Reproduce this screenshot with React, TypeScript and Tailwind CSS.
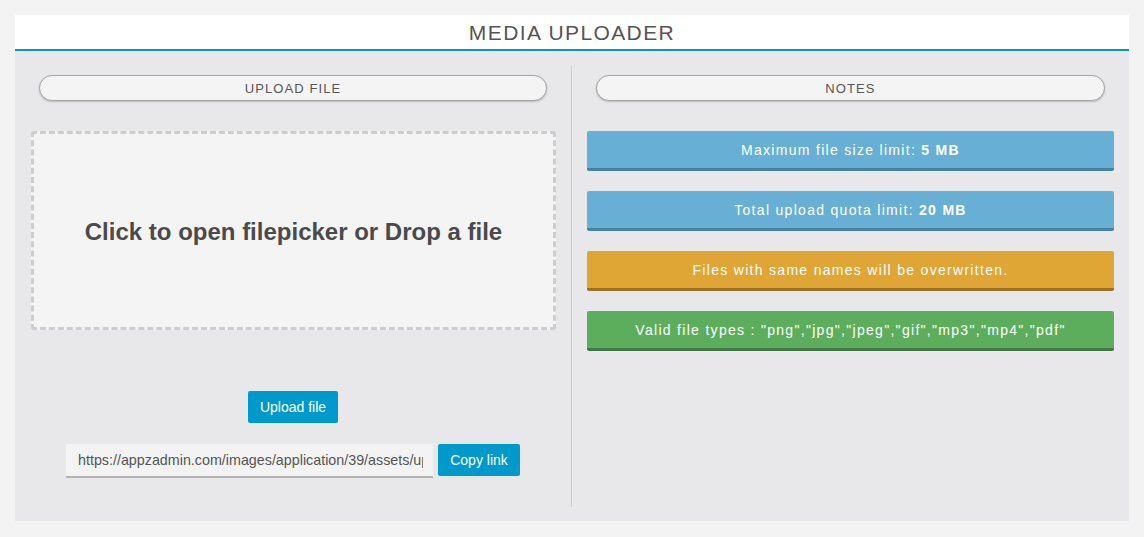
import React from "react"

const notes = [
  {
    key: "size",
    className: "bg-[#67afd4] border-[#4683a2]",
    body: (
      <>
        Maximum file size limit: <b>5 MB</b>
      </>
    ),
  },
  {
    key: "quota",
    className: "bg-[#67afd4] border-[#4683a2]",
    body: (
      <>
        Total upload quota limit: <b>20 MB</b>
      </>
    ),
  },
  {
    key: "overwrite",
    className: "bg-[#dfa535] border-[#9b7224]",
    body: <>Files with same names will be overwritten.</>,
  },
  {
    key: "types",
    className: "bg-[#5cae5d] border-[#3e7a3f]",
    body: <>Valid file types : "png","jpg","jpeg","gif","mp3","mp4","pdf"</>,
  },
]

function SectionPill({ label }: { label: string }) {
  return (
    <div className="h-[26px] pt-[2px] rounded-full border border-[#a4a4a4] bg-[#f4f4f4] shadow-[0_1px_2px_rgba(0,0,0,0.2)] flex items-center justify-center text-[13px] tracking-[1.1px] text-[#555]">
      {label}
    </div>
  )
}

export default function App() {
  return (
    <div
      className="min-h-[537px] bg-[#f3f3f3] pt-[15px] px-[15px]"
      style={{ fontFamily: '"Liberation Sans", Arial, sans-serif' }}
    >
      <div className="w-[1114px]">
        {/* header */}
        <div className="h-[36px] bg-white border-b-2 border-[#0096c6] flex items-center justify-center">
          <h1 className="text-[21px] font-normal text-[#555] tracking-[1.4px] pt-[1px]">MEDIA UPLOADER</h1>
        </div>

        <div className="bg-[#e8e8ea] pt-[15px] pb-[14px] flex">
          {/* upload side */}
          <div className="w-[557px] h-[441px] border-r border-[#cfcfcf] flex flex-col">
            <div className="mt-[9px] ml-[24px] w-[508px]">
              <SectionPill label="UPLOAD FILE" />
            </div>

            <div className="mt-[30px] ml-[16px] w-[525px] h-[199px] pt-[3px] rounded-[3px] border-[3px] border-dashed border-[#cdcdcd] bg-[#f4f4f4] flex items-center justify-center cursor-pointer">
              <span className="text-[24px] font-bold text-[#4a4a4a]">Click to open filepicker or Drop a file</span>
            </div>

            <div className="mt-[61px] flex justify-center">
              <button className="h-[32px] px-[12px] rounded-[2px] bg-[#0099cb] text-white text-[14px]">Upload file</button>
            </div>

            <div className="mt-[21px] flex justify-center gap-[5px]">
              <input
                readOnly
                value="https://appzadmin.com/images/application/39/assets/upload.png"
                className="w-[367px] h-[34px] pl-[12px] pr-[10px] bg-[#f3f3f3] border-b-2 border-[#b3b3b3] text-[14.3px] text-[#555] outline-none"
              />
              <button className="h-[32px] w-[82px] rounded-[2px] bg-[#0099cb] text-white text-[14px]">Copy link</button>
            </div>
          </div>

          {/* notes side */}
          <div className="w-[557px] flex flex-col">
            <div className="mt-[9px] ml-[24px] w-[509px]">
              <SectionPill label="NOTES" />
            </div>
            <div className="mt-[30px] ml-[15px] w-[527px] flex flex-col gap-[20px]">
              {notes.map((n) => (
                <div
                  key={n.key}
                  className={`h-[40px] pt-[1px] rounded-[2px] border-b-[3px] flex items-center justify-center text-white text-[14px] tracking-[1.3px] ${n.className}`}
                >
                  <span>{n.body}</span>
                </div>
              ))}
            </div>
          </div>
        </div>
      </div>
    </div>
  )
}
